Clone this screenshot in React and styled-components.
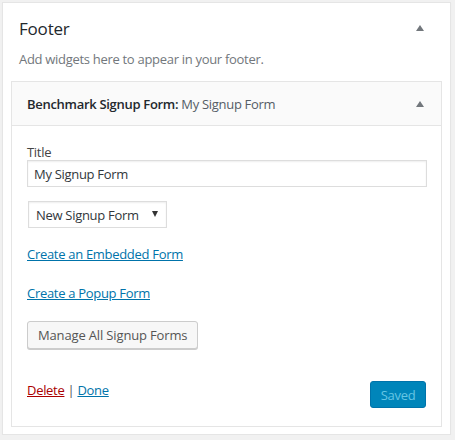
import React from "react";
import styled, { createGlobalStyle } from "styled-components";

const Global = createGlobalStyle`
  html, body { margin: 0; padding: 0; background: #f1f1f1; }
  body { font-family: "Open Sans", "Noto Sans", sans-serif; color: #444; font-size: 13px; letter-spacing: -0.3px; }
  * { box-sizing: border-box; }
`;

const Card = styled.section`
  margin: 2px 0 0 2px;
  width: 449px;
  height: 433px;
  background: #fff;
  border: 1px solid #e5e5e5;
  box-shadow: 0 1px 1px rgba(0,0,0,.04);
  padding: 0 8px;
  display: flex;
  flex-direction: column;
`;

const CardHead = styled.div`
  display: flex;
  align-items: center;
  justify-content: space-between;
  padding: 11px 18px 0 8px;
  height: 39px;
`;

const CardTitle = styled.h2`
  margin: 0;
  font-size: 17px;
  font-weight: 400;
  letter-spacing: -0.2px;
  color: #23282d;
`;

const Arrow = styled.span`
  width: 0;
  height: 0;
  border-left: 4px solid transparent;
  border-right: 4px solid transparent;
  border-bottom: 6px solid #72777c;
`;

const Desc = styled.p`
  margin: 8px 0 13px 8px;
  font-size: 13px;
  line-height: 18px;
  color: #72777c;
`;

const Widget = styled.div`
  border: 1px solid #e5e5e5;
  background: #fff;
`;

const WidgetTop = styled.div`
  display: flex;
  align-items: center;
  justify-content: space-between;
  height: 44px;
  padding: 0 17px 0 15px;
  background: #fafafa;
  border-bottom: 1px solid #e5e5e5;
`;

const WidgetTitle = styled.h3`
  margin: 0;
  font-size: 13px;
  font-weight: 600;
  color: #23282d;
`;

const InTitle = styled.span`
  font-weight: 400;
  color: #555d66;
`;

const Inside = styled.div`
  padding: 17px 15px 18px;
  display: flex;
  flex-direction: column;
  align-items: flex-start;
`;

const Label = styled.label`
  font-size: 13px;
  line-height: 18px;
  color: #444;
`;

const TextInput = styled.input`
  width: 400px;
  height: 27px;
  margin-top: -1px;
  padding: 0 6px;
  font-family: inherit;
  font-size: 13px;
  letter-spacing: -0.3px;
  color: #32373c;
  border: 1px solid #ddd;
  box-shadow: inset 0 1px 2px rgba(0,0,0,.07);
  outline: none;
`;

const SelectBox = styled.div`
  margin: 14px 0 0 1px;
  height: 27px;
  width: 139px;
  border: 1px solid #ddd;
  box-shadow: inset 0 1px 2px rgba(0,0,0,.07);
  display: flex;
  align-items: center;
  justify-content: space-between;
  padding: 0 8px 0 7px;
  font-size: 13px;
  color: #32373c;
`;

const Caret = styled.span`
  width: 0;
  height: 0;
  border-left: 3px solid transparent;
  border-right: 3px solid transparent;
  border-top: 6px solid #333;
  margin-top: -2px;
`;

const Link = styled.a`
  font-size: 13px;
  line-height: 18px;
  color: ${p => (p.$danger ? "#a00" : "#0073aa")};
  text-decoration: underline;
  margin-top: ${p => p.$mt || 0}px;
`;

const Button = styled.button`
  margin-top: 19px;
  height: 28px;
  padding: 0 10px;
  font-family: inherit;
  font-size: 13px;
  letter-spacing: -0.15px;
  color: #555;
  background: #f7f7f7;
  border: 1px solid #ccc;
  border-radius: 3px;
  box-shadow: 0 1px 0 #ccc;
`;

const Actions = styled.div`
  margin-top: 30px;
  width: 100%;
  display: flex;
  justify-content: space-between;
  align-items: flex-start;
`;

const LinkRow = styled.div`
  margin-top: 2px;
  font-size: 13px;
  line-height: 18px;
  color: #555;
`;

const Saved = styled.button`
  margin-top: 2px;
  height: 27px;
  width: 56px;
  padding: 0;
  font-family: inherit;
  font-size: 13px;
  letter-spacing: -0.3px;
  color: #66c6e4;
  background: #0085ba;
  border: 1px solid #0073aa;
  border-radius: 3px;
`;

export default function App() {
  return (
    <>
      <Global />
      <Card>
        <CardHead>
          <CardTitle>Footer</CardTitle>
          <Arrow />
        </CardHead>
        <Desc>Add widgets here to appear in your footer.</Desc>
        <Widget>
          <WidgetTop>
            <WidgetTitle>
              Benchmark Signup Form: <InTitle>My Signup Form</InTitle>
            </WidgetTitle>
            <Arrow />
          </WidgetTop>
          <Inside>
            <Label>Title</Label>
            <TextInput defaultValue="My Signup Form" />
            <SelectBox>
              <span>New Signup Form</span>
              <Caret />
            </SelectBox>
            <Link $mt={17}>Create an Embedded Form</Link>
            <Link $mt={21}>Create a Popup Form</Link>
            <Button>Manage All Signup Forms</Button>
            <Actions>
              <LinkRow>
                <Link $danger>Delete</Link> | <Link>Done</Link>
              </LinkRow>
              <Saved>Saved</Saved>
            </Actions>
          </Inside>
        </Widget>
      </Card>
    </>
  );
}
